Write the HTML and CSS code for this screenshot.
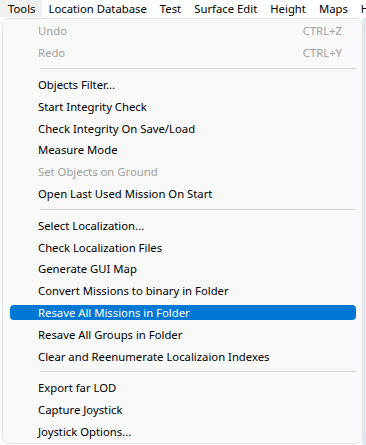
FILE: index.html
```html
<!DOCTYPE html>
<html lang="en">
<head>
    <meta charset="UTF-8">
    <title>Tools Menu</title>
    <link rel="stylesheet" href="styles.css">
</head>
<body>
    <div class="menubar">
        <div class="menubar-item open">Tools</div>
        <div class="menubar-item">Location Database</div>
        <div class="menubar-item">Test</div>
        <div class="menubar-item">Surface Edit</div>
        <div class="menubar-item">Height</div>
        <div class="menubar-item">Maps</div>
        <div class="menubar-item">Help</div>
    </div>
    <div class="backdrop">
        <div class="popup">
            <div class="item disabled"><span>Undo</span><span class="shortcut">CTRL+Z</span></div>
            <div class="item disabled"><span>Redo</span><span class="shortcut">CTRL+Y</span></div>
            <div class="sep"></div>
            <div class="item"><span>Objects Filter...</span></div>
            <div class="item"><span>Start Integrity Check</span></div>
            <div class="item"><span>Check Integrity On Save/Load</span></div>
            <div class="item"><span>Measure Mode</span></div>
            <div class="item disabled"><span>Set Objects on Ground</span></div>
            <div class="item"><span>Open Last Used Mission On Start</span></div>
            <div class="sep"></div>
            <div class="item"><span>Select Localization...</span></div>
            <div class="item"><span>Check Localization Files</span></div>
            <div class="item"><span>Generate GUI Map</span></div>
            <div class="item"><span>Convert Missions to binary in Folder</span></div>
            <div class="item active"><span>Resave All Missions in Folder</span></div>
            <div class="item"><span>Resave All Groups in Folder</span></div>
            <div class="item"><span>Clear and Reenumerate Localizaion Indexes</span></div>
            <div class="sep"></div>
            <div class="item"><span>Export far LOD</span></div>
            <div class="item"><span>Capture Joystick</span></div>
            <div class="item"><span>Joystick Options...</span></div>
        </div>
    </div>
</body>
</html>
```

FILE: styles.css
```css
* { margin: 0; padding: 0; box-sizing: border-box; }
body { font-family: "Noto Sans", "Open Sans", sans-serif; font-size: 11.3px; color: #000; background: #fff; width: 366px; height: 445px; overflow: hidden; }
.menubar { height: 18px; display: flex; background: #fff; white-space: nowrap; overflow: hidden; }
.menubar-item { padding: 0 6px 0 7px; line-height: 17px; height: 17px; flex-shrink: 0; }
.menubar-item.open { background: #f0f0f0; padding-left: 8px; }
.backdrop { background: linear-gradient(90deg, #fff 0, #fff 362px, #dce8f6 363px); height: 427px; padding-left: 2px; }
.popup { width: 361px; height: 426px; background: #f9f9f9; border: 1px solid #e3e3e3; border-radius: 7px; padding-top: 1px; }
.item { height: 21.8px; display: flex; align-items: center; justify-content: space-between; padding: 0 14px 0 29px; margin: 0 6px; }
.item.disabled { color: #a0a0a0; }
.item.active { background: #0078d4; color: #fff; border-radius: 4px; margin: 3px 6px 3px 7px; padding-left: 28px; height: 15.8px; }
.shortcut { color: #a0a0a0; }
.sep { height: 10px; display: flex; align-items: center; }
.sep::before { content: ""; display: block; height: 1px; background: #d6d6d6; margin: 0 6px 0 37px; flex: 1; }
```
